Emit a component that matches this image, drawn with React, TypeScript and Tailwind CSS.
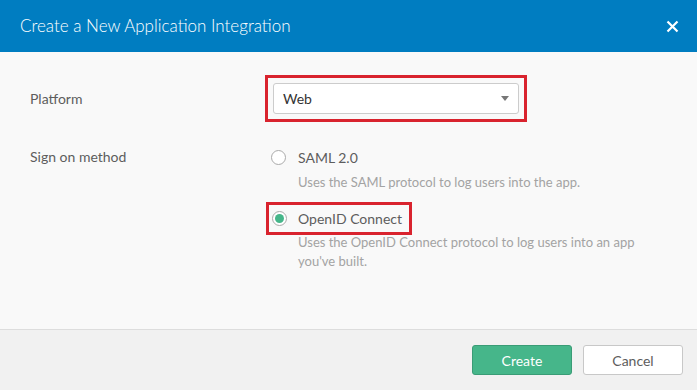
import React from "react";

function Radio({ checked }: { checked?: boolean }) {
  return (
    <span className="flex h-[15px] w-[15px] items-center justify-center rounded-full border border-[#aaa] bg-white">
      {checked && <span className="h-[9px] w-[9px] rounded-full bg-[#46b68a]" />}
    </span>
  );
}

export default function App() {
  return (
    <div className="flex h-[390px] w-[697px] flex-col bg-[#f9f9f9] font-['Lato',sans-serif] text-[#5d5d5d]">
      <div className="flex h-[52px] items-center justify-between bg-[#007dc1] pl-[20px] pr-[18px]">
        <h1 className="text-[17px] font-light text-white">Create a New Application Integration</h1>
        <svg width="13" height="13" viewBox="0 0 13 13" className="mt-[1px]">
          <path d="M1.5 1.5 L11.5 11.5 M11.5 1.5 L1.5 11.5" stroke="white" strokeWidth="2.2" />
        </svg>
      </div>

      <div className="flex-1 border-b border-[#ddd] pl-[30px]">
        <div className="mt-[23px] flex items-center">
          <div className="w-[235px] text-[14px]">Platform</div>
          <div className="border-[3px] border-[#d9232e] px-[5px] py-[5px]">
            <div className="flex h-[31px] w-[246px] items-center justify-between rounded-[3px] border border-[#ccc] bg-white pl-[9px] pr-[9px] text-[14px] text-[#333]">
              <span>Web</span>
              <svg width="8" height="5" viewBox="0 0 8 5">
                <path d="M0 0 H8 L4 5 Z" fill="#777" />
              </svg>
            </div>
          </div>
        </div>

        <div className="mt-[22px] flex">
          <div className="w-[236px] pt-[2px] text-[14px]">Sign on method</div>
          <div className="flex flex-col">
            <div className="flex items-center gap-[12px] pl-[5px] pt-[3px] text-[14px]">
              <Radio />
              <span>SAML 2.0</span>
            </div>
            <p className="mt-[5px] pl-[32px] text-[13px] text-[#a3a3a3]">
              Uses the SAML protocol to log users into the app.
            </p>
            <div className="mt-[9px] flex w-[146px] items-center gap-[11px] border-[3px] border-[#d9232e] py-[3px] pl-[3px] text-[14px] leading-[21px]">
              <Radio checked />
              <span>OpenID Connect</span>
            </div>
            <p className="-mt-[2px] w-[385px] pl-[32px] text-[13px] leading-[19px] text-[#a3a3a3]">
              Uses the OpenID Connect protocol to log users into an app you've built.
            </p>
          </div>
        </div>
      </div>

      <div className="flex h-[60px] items-center justify-end gap-[11px] bg-[#f1f1f1] pr-[14px]">
        <button className="h-[30px] w-[100px] rounded-[3px] border border-[#3a9c76] bg-[#46b68a] text-[14px] text-white">
          Create
        </button>
        <button className="h-[30px] w-[100px] rounded-[3px] border border-[#c8c8c8] bg-white text-[14px] text-[#5d5d5d]">
          Cancel
        </button>
      </div>
    </div>
  );
}
